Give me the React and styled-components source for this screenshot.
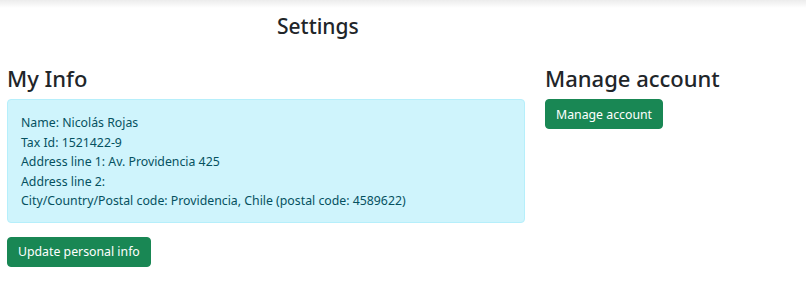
import React from "react";
import styled, { createGlobalStyle } from "styled-components";

const Global = createGlobalStyle`
  body {
    margin: 0;
    background: #ffffff;
    color: #212529;
    font-family: "Noto Sans", "Open Sans", sans-serif;
  }
  * { box-sizing: border-box; }
`;

const TopShade = styled.div`
  height: 8px;
  background: linear-gradient(#ececec, #ffffff);
`;

const Page = styled.main`
  padding: 0 7px;
`;

const PageTitle = styled.h1`
  margin: 6px 0 0 270px;
  font-size: 21px;
  line-height: 25px;
  font-weight: 500;
`;

const Row = styled.div`
  display: grid;
  grid-template-columns: 518px 1fr;
  column-gap: 20px;
  margin-top: 24px;
`;

const Col = styled.section`
  display: flex;
  flex-direction: column;
  align-items: flex-start;
`;

const Heading = styled.h2`
  margin: 0 0 6px;
  font-size: 22px;
  line-height: 30px;
  font-weight: 500;
`;

const Alert = styled.div`
  align-self: stretch;
  padding: 13px 13px 11px;
  background: #cff4fc;
  border: 1px solid #b6effb;
  border-radius: 4px;
  color: #055160;
  font-size: 12.3px;
  line-height: 19.5px;
`;

const Button = styled.button`
  height: 30px;
  margin-top: ${(p) => p.$gap || 0}px;
  padding: 0 10px;
  border: 1px solid #198754;
  border-radius: 4px;
  background: #198754;
  color: #ffffff;
  font-family: inherit;
  font-size: 12.3px;
  cursor: pointer;
`;

export default function App() {
  return (
    <>
      <Global />
      <TopShade />
      <Page>
        <PageTitle>Settings</PageTitle>
        <Row>
          <Col>
            <Heading>My Info</Heading>
            <Alert>
              <div>Name: Nicolás Rojas</div>
              <div>Tax Id: 1521422-9</div>
              <div>Address line 1: Av. Providencia 425</div>
              <div>Address line 2: </div>
              <div>City/Country/Postal code: Providencia, Chile (postal code: 4589622)</div>
            </Alert>
            <Button $gap={14}>Update personal info</Button>
          </Col>
          <Col>
            <Heading>Manage account</Heading>
            <Button>Manage account</Button>
          </Col>
        </Row>
      </Page>
    </>
  );
}
